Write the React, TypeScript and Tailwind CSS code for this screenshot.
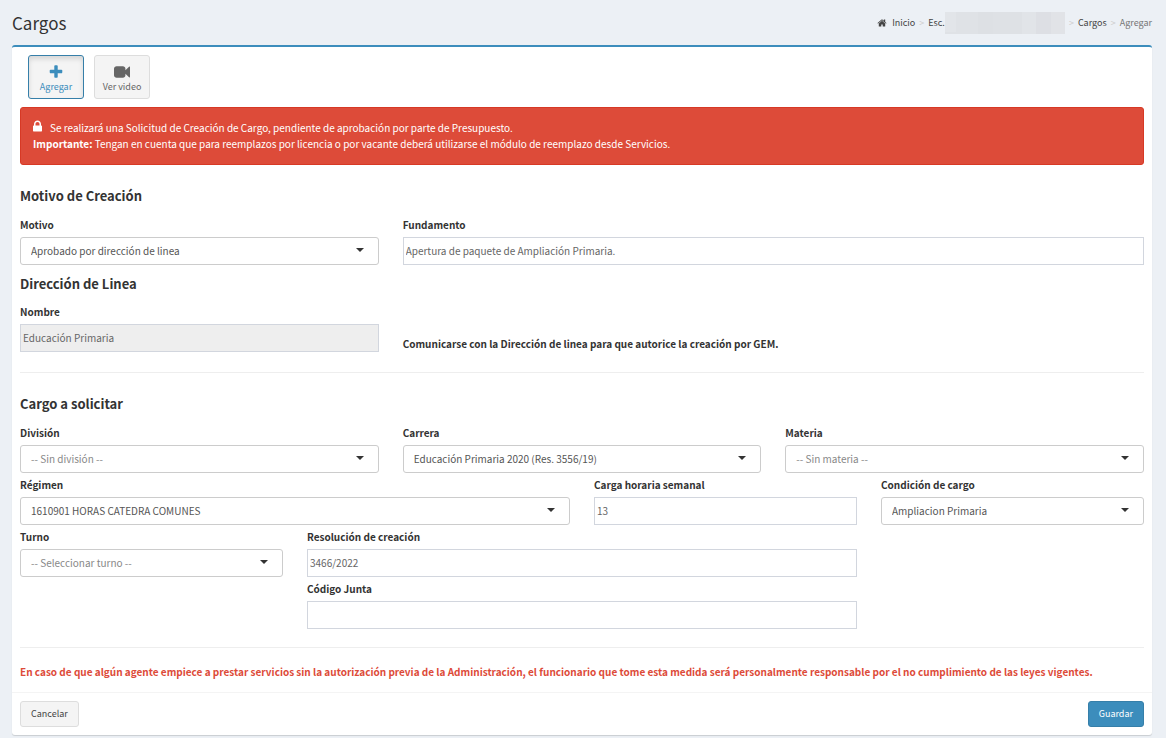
import { useId } from "react";
import type { ReactNode } from "react";

const ICONS = {
  home: {
    box: "0 0 1792 1792",
    d: "M1472 992v480q0 26-19 45t-45 19h-384v-384h-256v384h-384q-26 0-45-19t-19-45v-480q0-1 .5-3t.5-3l575-474 575 474q1 2 1 6zm223-69l-62 74q-8 9-21 11h-3q-13 0-21-7l-692-577-692 577q-12 8-24 7-13-2-21-11l-62-74q-8-10-7-23.5t11-21.5l719-599q32-26 76-26t76 26l244 204v-195q0-14 9-23t23-9h192q14 0 23 9t9 23v408l219 182q10 8 11 21.5t-7 23.5z",
  },
  plus: {
    box: "0 0 1792 1792",
    d: "M1600 736v192q0 40-28 68t-68 28h-416v416q0 40-28 68t-68 28h-192q-40 0-68-28t-28-68v-416h-416q-40 0-68-28t-28-68v-192q0-40 28-68t68-28h416v-416q0-40 28-68t68-28h192q40 0 68 28t28 68v416h416q40 0 68 28t28 68z",
  },
  video: {
    box: "0 0 1792 1792",
    d: "M1792 352v1088q0 42-39 59-13 5-25 5-27 0-45-19l-403-403v166q0 119-84.5 203.5t-203.5 84.5h-704q-119 0-203.5-84.5t-84.5-203.5v-704q0-119 84.5-203.5t203.5-84.5h704q119 0 203.5 84.5t84.5 203.5v165l403-402q18-19 45-19 12 0 25 5 39 17 39 59z",
  },
  lock: {
    box: "320 128 1152 1408",
    d: "M640 768h512v-192q0-106-75-181t-181-75-181 75-75 181v192zm832 96v576q0 40-28 68t-68 28h-960q-40 0-68-28t-28-68v-576q0-40 28-68t68-28h32v-192q0-184 132-316t316-132 316 132 132 316v192h32q40 0 68 28t28 68z",
  },
};

const Icon = ({ name, className }: { name: keyof typeof ICONS; className: string }) => (
  <svg viewBox={ICONS[name].box} fill="currentColor" aria-hidden="true" className={className}>
    <path d={ICONS[name].d} />
  </svg>
);

interface FieldProps {
  label: string;
  value: string;
  className: string;
  disabled?: boolean;
  empty?: boolean;
}

const TextField = ({ label, value, className, disabled }: FieldProps) => {
  const id = useId();
  return (
    <div className={className}>
      <label htmlFor={id} className="block mb-1 leading-4 font-bold">{label}</label>
      <input id={id} type="text" defaultValue={value} disabled={disabled} className="
        block w-full h-7 px-0.5 pb-0.5 border border-[#d2d6de] bg-white text-[#666]
        disabled:bg-[#eee] focus:outline-none focus:border-[#3c8dbc]" />
    </div>
  );
};

const SelectField = ({ label, value, className, empty }: FieldProps) => {
  const id = useId();
  return (
    <div className={className}>
      <label htmlFor={id} className="block mb-1 leading-4 font-bold">{label}</label>
      <div className="relative">
        <select id={id} className={`appearance-none block w-full h-7 pl-2.5 pr-8 border border-[#ccc] rounded-[3px] bg-white focus:outline-none focus:border-[#3c8dbc] ${empty ? "text-[#888]" : "text-[#555]"}`}>
          <option>{value}</option>
        </select>
        <svg viewBox="0 0 8 4" fill="currentColor" aria-hidden="true" className="absolute right-[15px] top-[11px] w-2 h-1 pointer-events-none">
          <path d="M0 0h8L4 4z" />
        </svg>
      </div>
    </div>
  );
};

const SectionTitle = ({ children }: { children: ReactNode }) => (
  <h2 className="text-[13px] leading-5 font-bold">{children}</h2>
);

// School name is masked with a row of grey blocks
const Redacted = () => (
  <span className="flex w-[120px] h-[22px] bg-[#dfe2e6]">
    <span className="w-[11px] h-5 bg-[#e2e5e9]"></span>
    <span className="w-[22px] bg-[#dfe2e6]"></span>
    <span className="w-[15px] bg-[#dde0e4]"></span>
    <span className="w-[29px] bg-[#dee1e5]"></span>
    <span className="w-[14px] bg-[#e1e4e8]"></span>
    <span className="w-[15px] bg-[#dddfe4]"></span>
    <span className="w-[14px] bg-[#e1e3e7]"></span>
  </span>
);

const Header = () => (
  <header className="flex items-center justify-between h-[45px] px-3">
    <h1 className="text-[17px] leading-6">Cargos</h1>
    <nav className="flex items-center gap-1 text-[9px] leading-4 text-[#444]">
      <a href="#" className="flex items-center gap-[5px]">
        <Icon name="home" className="w-2.5 h-2.5" />
        Inicio
      </a>
      <span className="text-[#ccc]">&gt;</span>
      <div className="flex items-center">
        <a href="#">Esc.</a>
        <Redacted />
      </div>
      <span className="text-[#ccc]">&gt;</span>
      <a href="#">Cargos</a>
      <span className="text-[#ccc]">&gt;</span>
      <span className="text-[#777]">Agregar</span>
    </nav>
  </header>
);

const App = () => {
  return (
    <div className="min-h-screen bg-[#ecf0f5] pb-[3px] pr-0.5 text-[10px] leading-4 text-[#333] font-['Noto_Sans_CJK_SC','Noto_Sans',sans-serif]">
      <Header />
      <main className="mx-3 border-t-2 border-[#3c8dbc] rounded-[3px] bg-white shadow-[0_1px_1px_rgba(0,0,0,0.15)]">
        <div className="px-2 pt-2 pb-3">
          <div className="flex gap-2.5 px-2 text-[9px]">
            <button type="button" className="flex flex-col items-center w-14 h-11 pt-2 border border-[#367fa9] rounded-[3px] bg-[#f4f4f4] text-[#3c8dbc] shadow-[inset_0_3px_5px_rgba(0,0,0,0.125)]">
              <Icon name="plus" className="w-4 h-4" />
              <span className="leading-[14px]">Agregar</span>
            </button>
            <button type="button" className="flex flex-col items-center w-14 h-11 pt-2 border border-[#ddd] rounded-[3px] bg-[#f4f4f4] text-[#666]">
              <Icon name="video" className="w-4 h-4" />
              <span className="leading-[14px]">Ver video</span>
            </button>
          </div>

          <div role="alert" className="mt-2 px-3 py-3 border border-[#d73925] rounded-[3px] bg-[#dd4b39] text-white">
            <p className="flex items-start gap-2">
              <Icon name="lock" className="w-[9px] h-3" />
              Se realizará una Solicitud de Creación de Cargo, pendiente de aprobación por parte de Presupuesto.
            </p>
            <p>
              <strong>Importante:</strong> Tengan en cuenta que para reemplazos por licencia o por vacante deberá utilizarse el módulo de reemplazo desde Servicios.
            </p>
          </div>

          <section className="mt-[21px]">
            <SectionTitle>Motivo de Creación</SectionTitle>
            <div className="grid grid-cols-12 gap-x-6 mt-[11px]">
              <SelectField label="Motivo" value="Aprobado por dirección de linea" className="col-span-4" />
              <TextField label="Fundamento" value="Apertura de paquete de Ampliación Primaria." className="col-span-8" />
            </div>
          </section>

          <section className="mt-[9px]">
            <SectionTitle>Dirección de Linea</SectionTitle>
            <div className="grid grid-cols-12 gap-x-6 items-end mt-[10px]">
              <TextField label="Nombre" value="Educación Primaria" className="col-span-4" disabled />
              <p className="col-span-8 font-bold">Comunicarse con la Dirección de linea para que autorice la creación por GEM.</p>
            </div>
          </section>

          <hr className="mt-5 border-[#eee]" />

          <section className="mt-[21px]">
            <SectionTitle>Cargo a solicitar</SectionTitle>
            <div className="grid grid-cols-12 gap-x-6 gap-y-1 mt-[11px]">
              <SelectField label="División" value="-- Sin división --" className="col-span-4" empty />
              <SelectField label="Carrera" value="Educación Primaria 2020 (Res. 3556/19)" className="col-span-4" />
              <SelectField label="Materia" value="-- Sin materia --" className="col-span-4" empty />
              <SelectField label="Régimen" value="1610901 HORAS CATEDRA COMUNES" className="col-span-6" />
              <TextField label="Carga horaria semanal" value="13" className="col-span-3" />
              <SelectField label="Condición de cargo" value="Ampliacion Primaria" className="col-span-3" />
              <SelectField label="Turno" value="-- Seleccionar turno --" className="col-span-3" empty />
              <TextField label="Resolución de creación" value="3466/2022" className="col-span-6" />
              <TextField label="Código Junta" value="" className="col-start-4 col-span-6" />
            </div>
          </section>

          <hr className="mt-[18px] border-[#eee]" />
          <p className="mt-4 font-bold text-[#dd4b39]">
            En caso de que algún agente empiece a prestar servicios sin la autorización previa de la Administración, el funcionario que tome esta medida será personalmente responsable por el no cumplimiento de las leyes vigentes.
          </p>
        </div>

        <footer className="flex justify-between p-2 border-t border-[#f4f4f4] text-[9px]">
          <button type="button" className="h-[26px] px-2.5 border border-[#ddd] rounded-[3px] bg-[#f4f4f4] text-[#444]">Cancelar</button>
          <button type="submit" className="h-[26px] px-2.5 border border-[#367fa9] rounded-[3px] bg-[#3c8dbc] text-white">Guardar</button>
        </footer>
      </main>
    </div>
  );
};

export default App;
